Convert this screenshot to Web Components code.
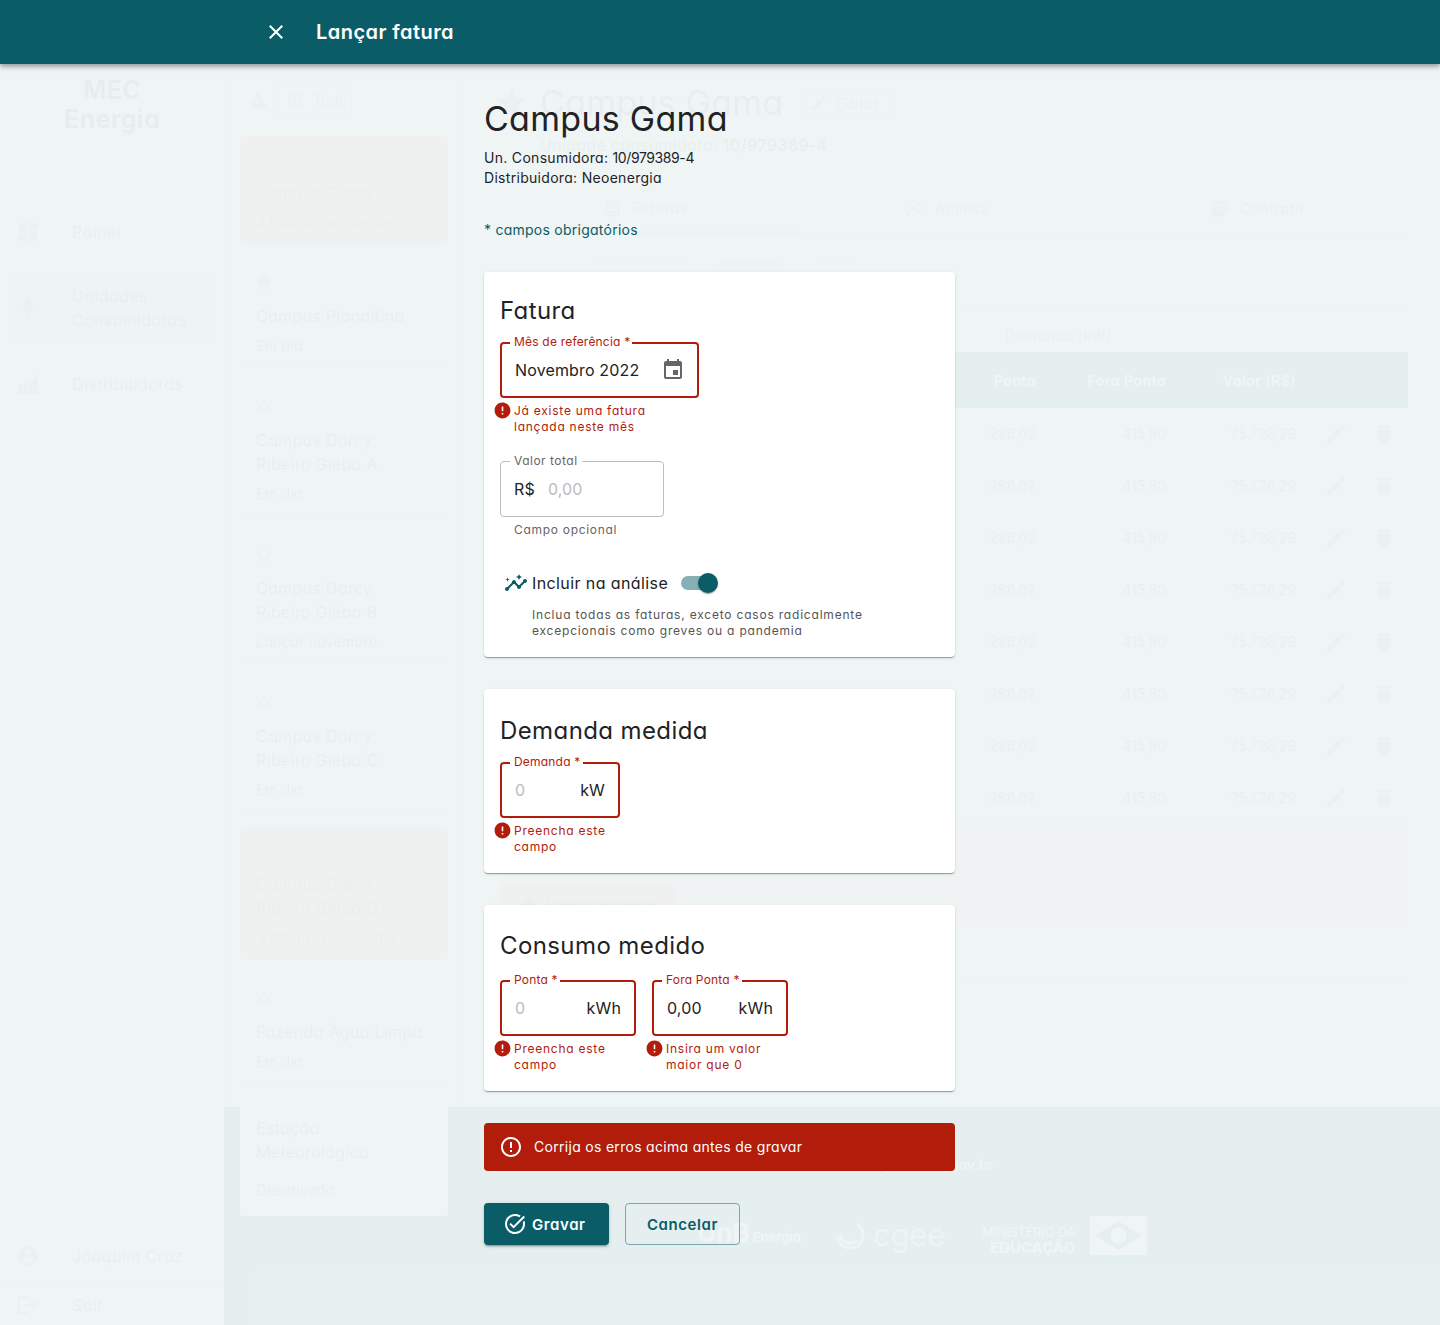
<!DOCTYPE html>
<html lang="pt-BR">
<head>
<meta charset="utf-8">
<title>Lançar fatura</title>
<style>
  html, body { margin: 0; padding: 0; }
  body {
    width: 1440px;
    height: 1325px;
    overflow: hidden;
    position: relative;
    background: #fff;
    color: #222;
    font-family: Inter, "Noto Sans", sans-serif;
    font-feature-settings: "cv11";
  }
</style>
</head>
<body>
<app-page>
  <side-nav slot="nav"></side-nav>
  <unit-list slot="list"></unit-list>
  <unit-detail slot="detail"></unit-detail>
  <site-footer slot="footer"></site-footer>
</app-page>

<invoice-drawer title="Lançar fatura">
  <drawer-heading name="Campus Gama" consumer="10/979389-4" supplier="Neoenergia"></drawer-heading>

  <form-card heading="Fatura" style="--top: 23px; --gap: 15px; --bottom: 18px">
    <out-field label="Mês de referência *" width="199" invalid>
      Novembro 2022
      <m-icon slot="end" name="event" size="24" style="color:#666;margin-right:-1px"></m-icon>
      <field-error slot="below">Já existe uma fatura<br>lançada neste mês</field-error>
    </out-field>
    <out-field label="Valor total" width="164" style="margin-top:26px">
      <span slot="start">R$</span>
      <span style="color:#bbb">0,00</span>
      <field-help slot="below">Campo opcional</field-help>
    </out-field>
    <analysis-toggle>Inclua todas as faturas, exceto casos radicalmente<br>excepcionais como greves ou a pandemia</analysis-toggle>
  </form-card>

  <form-card heading="Demanda medida" style="--top: 26px; --gap: 15px; --bottom: 18px">
    <out-field label="Demanda *" width="120" invalid>
      <span style="color:#bbb">0</span>
      <span slot="end">kW</span>
      <field-error slot="below">Preencha este<br>campo</field-error>
    </out-field>
  </form-card>

  <form-card heading="Consumo medido" style="--top: 25px; --gap: 18px; --bottom: 18px">
    <field-row>
      <out-field label="Ponta *" width="136" invalid>
        <span style="color:#bbb">0</span>
        <span slot="end">kWh</span>
        <field-error slot="below">Preencha este<br>campo</field-error>
      </out-field>
      <out-field label="Fora Ponta *" width="136" invalid>
        0,00
        <span slot="end">kWh</span>
        <field-error slot="below">Insira um valor<br>maior que 0</field-error>
      </out-field>
    </field-row>
  </form-card>

  <error-banner>Corrija os erros acima antes de gravar</error-banner>
  <form-actions></form-actions>
</invoice-drawer>

<script>
const ICONS = {
  close: 'M19 6.41 17.59 5 12 10.59 6.41 5 5 6.41 10.59 12 5 17.59 6.41 19 12 13.41 17.59 19 19 17.59 13.41 12z',
  event: 'M17 12h-5v5h5v-5zM16 1v2H8V1H6v2H5c-1.11 0-1.99.9-1.99 2L3 19c0 1.1.89 2 2 2h14c1.1 0 2-.9 2-2V5c0-1.1-.9-2-2-2h-1V1h-2zm3 18H5V8h14v11z',
  error: 'M12 2C6.48 2 2 6.48 2 12s4.48 10 10 10 10-4.48 10-10S17.52 2 12 2zm1 15h-2v-2h2v2zm0-4h-2V7h2v6z',
  errorOutline: 'M11 15h2v2h-2zm0-8h2v6h-2zm.99-5C6.47 2 2 6.48 2 12s4.47 10 9.99 10C17.52 22 22 17.52 22 12S17.52 2 11.99 2zM12 20c-4.42 0-8-3.58-8-8s3.58-8 8-8 8 3.58 8 8-3.58 8-8 8z',
  insights: 'M21 8c-1.45 0-2.26 1.44-1.93 2.51l-3.55 3.56c-.3-.09-.74-.09-1.04 0l-2.55-2.55C12.27 10.45 11.46 9 10 9c-1.45 0-2.27 1.44-1.93 2.52l-4.56 4.55C2.44 15.74 1 16.55 1 18c0 1.1.9 2 2 2 1.45 0 2.26-1.44 1.93-2.51l4.55-4.56c.3.09.74.09 1.04 0l2.55 2.55C12.73 16.55 13.54 18 15 18c1.45 0 2.27-1.44 1.93-2.52l3.56-3.55c1.07.33 2.51-.48 2.51-1.93 0-1.1-.9-2-2-2zM15 9l.94-2.07L18 6l-2.06-.93L15 3l-.92 2.07L12 6l2.08.93L15 9zM3.5 11 4 9l2-.5L4 8l-.5-2L3 8l-2 .5L3 9l.5 2z',
  taskAlt: 'M22 5.18 10.59 16.6l-4.24-4.24 1.41-1.41 2.83 2.83 10-10L22 5.18zm-2.21 5.04c.13.57.21 1.17.21 1.78 0 4.42-3.58 8-8 8s-8-3.58-8-8 3.58-8 8-8c1.58 0 3.04.46 4.28 1.25l1.44-1.44C16.1 2.67 14.13 2 12 2 6.48 2 2 6.48 2 12s4.48 10 10 10 10-4.48 10-10c0-1.19-.22-2.33-.6-3.39l-1.61 1.61z',
  star: 'M12 17.27 18.18 21l-1.64-7.03L22 9.24l-7.19-.61L12 2 9.19 8.63 2 9.24l5.46 4.73L5.82 21z',
  starBorder: 'M22 9.24l-7.19-.62L12 2 9.19 8.63 2 9.24l5.46 4.73L5.82 21 12 17.27 18.18 21l-1.63-7.03L22 9.24zM12 15.4l-3.76 2.27 1-4.28-3.32-2.88 4.38-.38L12 6.1l1.71 4.04 4.38.38-3.32 2.88 1 4.28L12 15.4z',
  dashboard: 'M3 13h8V3H3v10zm0 8h8v-6H3v6zm10 0h8V11h-8v10zm0-18v6h8V3h-8z',
  bulb: 'M3.55 18.54l1.41 1.41 1.79-1.8-1.41-1.41-1.79 1.8zM11 22.45h2V19.5h-2v2.95zM4 10.5H1v2h3v-2zm11-4.19V1.5H9v4.81C7.21 7.35 6 9.28 6 11.5c0 3.31 2.69 6 6 6s6-2.69 6-6c0-2.22-1.21-4.15-3-5.19zm5 4.19v2h3v-2h-3zm-2.76 7.66l1.79 1.8 1.41-1.41-1.8-1.79-1.4 1.4z',
  factory: 'M22 22H2V11l6 2v-2l6 2V9h4l.5-6h2.5l1 6v13zM6 16v3h2v-3H6zm5 0v3h2v-3h-2zm5 0v3h2v-3h-2z',
  edit: 'M3 17.25V21h3.75L17.81 9.94l-3.75-3.75L3 17.25zM20.71 7.04c.39-.39.39-1.02 0-1.41l-2.34-2.34c-.39-.39-1.02-.39-1.41 0l-1.83 1.83 3.75 3.75 1.83-1.83z',
  trash: 'M6 19c0 1.1.9 2 2 2h8c1.1 0 2-.9 2-2V7H6v12zM19 4h-3.5l-1-1h-5l-1 1H5v2h14V4z',
  account: 'M12 2C6.48 2 2 6.48 2 12s4.48 10 10 10 10-4.48 10-10S17.52 2 12 2zm0 3c1.66 0 3 1.34 3 3s-1.34 3-3 3-3-1.34-3-3 1.34-3 3-3zm0 14.2c-2.5 0-4.71-1.28-6-3.22.03-1.99 4-3.08 6-3.08 1.99 0 5.97 1.09 6 3.08-1.29 1.94-3.5 3.22-6 3.22z',
  logout: 'M17 7l-1.41 1.41L18.17 11H8v2h10.17l-2.58 2.58L17 17l5-5zM4 5h8V3H4c-1.1 0-2 .9-2 2v14c0 1.1.9 2 2 2h8v-2H4V5z',
  warning: 'M1 21h22L12 2 1 21zm12-3h-2v-2h2v2zm0-4h-2v-4h2v4z',
  grid: 'M4 8h4V4H4v4zm6 12h4v-4h-4v4zm-6 0h4v-4H4v4zm0-6h4v-4H4v4zm6 0h4v-4h-4v4zm6-10v4h4V4h-4zm-6 4h4V4h-4v4zm6 6h4v-4h-4v4zm0 6h4v-4h-4v4z',
  receipt: 'M19.5 3.5 18 2l-1.5 1.5L15 2l-1.5 1.5L12 2l-1.5 1.5L9 2 7.5 3.5 6 2v14H3v3c0 1.66 1.34 3 3 3h12c1.66 0 3-1.34 3-3V2l-1.5 1.5zM15 20H6c-.55 0-1-.45-1-1v-1h10v2zm4-1c0 .55-.45 1-1 1s-1-.45-1-1v-3H8V5h11v14zM9 7h6v2H9zm7 0h2v2h-2zM9 10h6v2H9zm7 0h2v2h-2z',
  note: 'M3 3h18v13l-5 5H3V3zm3 4v2h12V7H6zm0 4v2h8v-2H6zm9 8 4-4h-4v4z'
};

class MIcon extends HTMLElement {
  connectedCallback() {
    if (this.shadowRoot) return;
    const size = this.getAttribute('size') || 24;
    this.attachShadow({ mode: 'open' });
    this.shadowRoot.innerHTML = `
      <style>
        :host { display: inline-flex; flex: none; width: ${size}px; height: ${size}px; }
        svg { display: block; width: 100%; height: 100%; fill: currentColor; }
      </style>
      <svg viewBox="0 0 24 24"><path d="${ICONS[this.getAttribute('name')]}"></path></svg>
    `;
  }
}

class AppPage extends HTMLElement {
  connectedCallback() {
    this.attachShadow({ mode: 'open' });
    this.shadowRoot.innerHTML = `
      <style>
        :host {
          display: grid;
          grid-template-columns: 224px 239px 1fr;
          grid-template-rows: 1107px 218px;
          height: 1325px;
        }
        ::slotted([slot=nav]) { grid-row: 1 / 3; grid-column: 1; }
        ::slotted([slot=list]) { grid-row: 1; grid-column: 2; z-index: 1; }
        ::slotted([slot=detail]) { grid-row: 1; grid-column: 3; }
        ::slotted([slot=footer]) { grid-row: 2; grid-column: 2 / 4; }
      </style>
      <slot name="nav"></slot>
      <slot name="list"></slot>
      <slot name="detail"></slot>
      <slot name="footer"></slot>
    `;
  }
}

class SideNav extends HTMLElement {
  connectedCallback() {
    this.attachShadow({ mode: 'open' });
    const item = (icon, label, extra = '') => `
      <div class="item ${extra}"><m-icon name="${icon}"></m-icon><span>${label}</span></div>`;
    this.shadowRoot.innerHTML = `
      <style>
        :host {
          display: flex;
          flex-direction: column;
          background: #fff;
          box-shadow: 1px 0 3px rgba(0,0,0,.3);
          position: relative;
          z-index: 2;
          font-size: 16px;
          letter-spacing: .4px;
          color: #333;
        }
        .logo { padding-top: 76px; text-align: center; font-size: 25px; line-height: 29px; font-weight: 700; }
        nav { margin-top: 67px; padding: 0 10px; display: flex; flex-direction: column; }
        .item {
          display: flex; align-items: center; gap: 32px;
          padding: 0 0 0 6px; min-height: 62px; line-height: 24px; border-radius: 4px; color: #444;
        }
        .item m-icon { color: #999; }
        .item + .item { margin-top: 14px; }
        .active { background: #d2d2d2; }
        .foot { margin-top: auto; margin-bottom: -4px; }
        .row { display: flex; align-items: center; gap: 32px; padding: 0 0 0 16px; height: 48px; color: #444; }
        .row m-icon { color: #999; }
        .row + .row { border-top: 1px solid #ccc; }
      </style>
      <div class="logo">MEC<br>Energia</div>
      <nav>
        ${item('dashboard', 'Painel')}
        ${item('bulb', 'Unidades<br>Consumidoras', 'active')}
        ${item('factory', 'Distribuidoras')}
      </nav>
      <div class="foot">
        <div class="row"><m-icon name="account"></m-icon><span>Joaquim Cruz</span></div>
        <div class="row"><m-icon name="logout"></m-icon><span>Sair</span></div>
      </div>
    `;
  }
}

class UnitCard extends HTMLElement {
  connectedCallback() {
    this.attachShadow({ mode: 'open' });
    const star = this.getAttribute('star');
    this.shadowRoot.innerHTML = `
      <style>
        :host {
          display: block;
          padding: 10px 16px 11px;
          border-bottom: 1px solid #ccc;
          box-sizing: border-box;
          border-radius: 4px;
          color: #444;
          letter-spacing: .3px;
        }
        :host([alert]) { background: #ff8c8c; border-bottom: none; padding-bottom: 12px; }
        :host([plain]) { padding: 16px; border: 0; background: #fff; height: 116px; }
        m-icon { display: flex; color: #888; margin: 0 0 10px -2px; width: 20px; height: 24px; align-items: center; }
        .name { font-size: 16px; line-height: 24px; }
        .sub { font-size: 14px; line-height: 20px; margin-top: 8px; }
        :host([plain]) .sub { margin-top: 16px; }
      </style>
      ${star ? `<m-icon name="${star}" size="20"></m-icon>` : ''}
      <div class="name"><slot></slot></div>
      <div class="sub">${this.getAttribute('sub')}</div>
    `;
  }
}

class UnitList extends HTMLElement {
  connectedCallback() {
    this.attachShadow({ mode: 'open' });
    this.shadowRoot.innerHTML = `
      <style>
        :host {
          display: block;
          background: #fff;
          border-right: 1px solid #aaa;
          box-sizing: border-box;
          padding: 81px 14px 0 16px;
          height: 1107px;
        }
        .filters { display: flex; align-items: center; gap: 6px; height: 38px; padding-left: 8px; margin-bottom: 17px; color: #888; }
        .all { display: flex; align-items: center; gap: 8px; height: 38px; padding: 0 10px; border: 1px solid #ccc; border-radius: 4px; font-size: 14px; font-weight: 600; width: 78px; box-sizing: border-box; }
        .cards { display: flex; flex-direction: column; gap: 16px; width: 208px; }
      </style>
      <div class="filters">
        <m-icon name="warning" size="20"></m-icon>
        <div class="all"><m-icon name="grid" size="20"></m-icon>Tudo</div>
      </div>
      <div class="cards">
        <unit-card star="star" sub="3 faturas pendentes" alert>Campus Gama</unit-card>
        <unit-card star="star" sub="Em dia">Campus Planaltina</unit-card>
        <unit-card star="starBorder" sub="Em dia">Campus Darcy<br>Ribeiro Gleba A</unit-card>
        <unit-card star="starBorder" sub="Lançar novembro">Campus Darcy<br>Ribeiro Gleba B</unit-card>
        <unit-card star="starBorder" sub="Em dia">Campus Darcy<br>Ribeiro Gleba C</unit-card>
        <unit-card star="starBorder" sub="3 faturas pendentes" alert>Campus Darcy<br>Ribeiro Gleba D</unit-card>
        <unit-card star="starBorder" sub="Em dia">Fazenda Água Limpa</unit-card>
        <unit-card sub="Desativada" plain>Estação<br>Meteorológica</unit-card>
      </div>
    `;
  }
}

class UnitDetail extends HTMLElement {
  connectedCallback() {
    this.attachShadow({ mode: 'open' });
    const row = `<div class="tr"><span></span><span class="n">286,02</span><span class="n">415,80</span><span class="n">75.726,29</span><m-icon name="edit"></m-icon><m-icon name="trash"></m-icon></div>`;
    this.shadowRoot.innerHTML = `
      <style>
        :host {
          display: block;
          background: #fff;
          padding: 82px 32px 0 35px;
          color: #444;
          overflow: hidden;
        }
        .title { display: flex; align-items: center; height: 42px; }
        .title > m-icon { margin: 0 11px 0 -5px; color: #888; }
        h1 { margin: 0 18px 0 0; font-size: 34px; line-height: 42px; font-weight: 400; letter-spacing: .25px; white-space: nowrap; }
        .edit { display: flex; align-items: center; gap: 8px; width: 90px; height: 30px; box-sizing: border-box; padding-left: 8px; border: 1px solid #bbb; border-radius: 4px; font-size: 14px; font-weight: 600; letter-spacing: .5px; color: #888; }
        .uc { margin: 9px 0 0 42px; font-size: 16px; line-height: 24px; letter-spacing: .3px; }
        .uc b { font-weight: 600; }
        .tabs { display: grid; grid-template-columns: repeat(3, 302px); margin-top: 29px; height: 47px; align-items: flex-start; border-bottom: 1px solid #ddd; color: #888; font-size: 14px; font-weight: 600; letter-spacing: .5px; }
        .tab { display: flex; align-items: center; justify-content: center; gap: 10px; height: 46px; box-sizing: border-box; }
        .tab.on { border-bottom: 2px solid #9bb; height: 47px; padding-bottom: 2px; }
        .tab.on, .tab.mid { padding-right: 8px; }
        .tab.end { padding-left: 8px; }
        .tab span { margin-top: -1px; }
        .chips { display: flex; margin: 27px 0 0 84px; gap: 18px; padding-bottom: 12px; border-bottom: 1px solid #ddd; }
        .chip { height: 32px; border: 1px solid #bbb; border-radius: 16px; box-sizing: border-box; }
        .t { display: grid; grid-template-columns: 457px 97px 130px 130px 48px 48px; }
        .group { margin-top: 14px; height: 32px; }
        .group div { grid-column: 2 / 4; background: #f2f7f7; box-sizing: border-box; padding-right: 20px; text-align: center; font-size: 14px; line-height: 32px; font-weight: 600; letter-spacing: .4px; color: #888; }
        .th { height: 56px; display: grid; grid-template-columns: 457px 97px 130px 130px 96px; align-items: center; background: #0a5c67; color: #fff; font-size: 14px; font-weight: 600; letter-spacing: .5px; }
        .th span { text-align: right; padding-right: 16px; }
        .tr { display: grid; grid-template-columns: 457px 97px 130px 130px 48px 48px; align-items: center; height: 52px; border-bottom: 1px solid #e8e8e8; box-sizing: border-box; font-size: 14px; color: #555; }
        .n { text-align: right; padding-right: 16px; }
        .tr m-icon { justify-self: center; color: #888; }
        .pending { height: 53px; background: #ffbcbc; border-bottom: 1px solid #ffd0d0; box-sizing: border-box; }
        .pending.first { margin-top: -1px; }
        .pending.go { display: flex; padding: 9px 0 0 2px; }
        .launch { display: flex; align-items: center; gap: 8px; width: 176px; height: 36px; padding-left: 20px; box-sizing: border-box; border-radius: 4px; background: #ff7070; font-size: 14px; font-weight: 600; letter-spacing: .4px; color: #555; }
        .blank { height: 51px; border-bottom: 1px solid #d8d8d8; box-sizing: border-box; }
      </style>
      <div class="title">
        <m-icon name="star" size="36"></m-icon>
        <h1>Campus Gama</h1>
        <div class="edit"><m-icon name="edit" size="18"></m-icon>Editar</div>
      </div>
      <div class="uc">Unidade consumidora: <b>10/979389-4</b></div>
      <div class="tabs">
        <div class="tab on"><m-icon name="receipt" size="20"></m-icon><span>Faturas</span></div>
        <div class="tab mid"><m-icon name="insights" size="20"></m-icon><span>Análise</span></div>
        <div class="tab end"><m-icon name="note" size="20"></m-icon><span>Contrato</span></div>
      </div>
      <div class="chips">
        <div class="chip" style="width:110px"></div>
        <div class="chip" style="width:80px;background:#c4dcdd"></div>
        <div class="chip" style="width:52px"></div>
      </div>
      <div class="t group"><span></span><div>Demanda (kW)</div></div>
      <div class="th"><span></span><span>Ponta</span><span>Fora Ponta</span><span>Valor (R$)</span><span></span></div>
      ${row.repeat(8)}
      <div class="pending first"></div>
      <div class="pending go"><div class="launch"><m-icon name="warning" size="18"></m-icon>Lançar outubro</div></div>
      <div class="blank"></div>
    `;
  }
}

class SiteFooter extends HTMLElement {
  connectedCallback() {
    this.attachShadow({ mode: 'open' });
    this.shadowRoot.innerHTML = `
      <style>
        :host {
          display: block;
          background: #0a5c67;
          color: #fff;
          overflow: hidden;
          padding-top: 48px;
        }
        .mail { text-align: right; padding-right: 447px; font-size: 14px; line-height: 20px; letter-spacing: .2px; }
        .logos { display: flex; align-items: center; justify-content: flex-end; padding: 40px 293px 0 0; height: 40px; }
        .unb { display: flex; align-items: baseline; gap: 3px; width: 97px; margin-right: 41px; font-size: 26px; font-weight: 700; line-height: 40px; white-space: nowrap; }
        .unb small { font-size: 13px; font-weight: 600; }
        .cgee { display: flex; align-items: center; gap: 8px; margin-right: 37px; font-size: 31px; line-height: 40px; font-weight: 300; }
        .cgee svg { width: 30px; height: 30px; fill: none; stroke: #fff; stroke-width: 3; }
        .mec { text-align: right; font-size: 12.5px; line-height: 15px; margin: 9px 15px 0 0; }
        .mec b { display: block; font-size: 15px; font-weight: 700; }
        .flag { width: 57px; height: 39px; background: #fff; display: flex; }
        .flag svg { width: 100%; height: 100%; }
      </style>
      <div class="mail">Entre em contato: mecenergia@mec.gov.br</div>
      <div class="logos">
        <div class="unb">UnB <small>Energia</small></div>
        <div class="cgee">
          <svg viewBox="0 0 30 30"><path d="M22 4a13 13 0 1 1-20 12M5 15a10 10 0 0 0 17 5"></path></svg>
          cgee
        </div>
        <div class="mec">MINISTÉRIO DA<b>EDUCAÇÃO</b></div>
        <div class="flag"><svg viewBox="0 0 57 39"><path d="M5 19.5 28.5 5 52 19.5 28.5 34z" fill="#0a5c67"></path><circle cx="28.5" cy="19.5" r="8" fill="#fff"></circle></svg></div>
      </div>
    `;
  }
}

class InvoiceDrawer extends HTMLElement {
  connectedCallback() {
    this.attachShadow({ mode: 'open' });
    this.shadowRoot.innerHTML = `
      <style>
        :host {
          display: block;
          position: absolute;
          inset: 0;
          z-index: 10;
          background: rgba(238, 245, 245, .963);
        }
        header {
          display: flex;
          align-items: center;
          height: 64px;
          padding-left: 264px;
          background: #0a5c67;
          color: #fff;
          box-shadow: 0 2px 4px rgba(0,0,0,.25), 0 4px 5px rgba(0,0,0,.14);
        }
        h2 { margin: 0 0 0 28px; font-size: 20px; line-height: 28px; font-weight: 600; letter-spacing: .45px; }
        main { display: flex; flex-direction: column; width: 471px; margin-left: 484px; }
      </style>
      <header>
        <m-icon name="close" size="24"></m-icon>
        <h2>${this.getAttribute('title')}</h2>
      </header>
      <main><slot></slot></main>
    `;
  }
}

class DrawerHeading extends HTMLElement {
  connectedCallback() {
    this.attachShadow({ mode: 'open' });
    this.shadowRoot.innerHTML = `
      <style>
        :host { display: block; padding-top: 35px; color: #1f2326; }
        h1 { margin: 0 0 9px; font-size: 34px; line-height: 40px; font-weight: 400; letter-spacing: .28px; }
        p { margin: 0; font-size: 14px; line-height: 20px; letter-spacing: .3px; }
        p span { letter-spacing: -.4px; }
        .req { margin: 32px 0; color: #0a5c67; letter-spacing: .25px; }
      </style>
      <h1>${this.getAttribute('name')}</h1>
      <p>Un. Consumidora: <span>${this.getAttribute('consumer')}</span></p>
      <p>Distribuidora: ${this.getAttribute('supplier')}</p>
      <p class="req">* campos obrigatórios</p>
    `;
  }
}

class FormCard extends HTMLElement {
  connectedCallback() {
    this.attachShadow({ mode: 'open' });
    this.shadowRoot.innerHTML = `
      <style>
        :host {
          display: block;
          background: #fff;
          border-radius: 4px;
          padding: var(--top) 16px var(--bottom);
          margin-bottom: 32px;
          box-shadow: 0 2px 1px -1px rgba(0,0,0,.2), 0 1px 1px rgba(0,0,0,.14), 0 1px 3px rgba(0,0,0,.12);
        }
        h3 { margin: 0 0 var(--gap); font-size: 24px; line-height: 32px; font-weight: 400; letter-spacing: .4px; color: #1f2326; }
      </style>
      <h3>${this.getAttribute('heading')}</h3>
      <slot></slot>
    `;
  }
}

class FieldRow extends HTMLElement {
  connectedCallback() {
    this.attachShadow({ mode: 'open' });
    this.shadowRoot.innerHTML = `
      <style>:host { display: flex; gap: 16px; }</style>
      <slot></slot>
    `;
  }
}

class OutField extends HTMLElement {
  connectedCallback() {
    this.attachShadow({ mode: 'open' });
    this.shadowRoot.innerHTML = `
      <style>
        :host { display: block; width: ${this.getAttribute('width')}px; }
        .box {
          position: relative;
          display: flex;
          align-items: center;
          height: 56px;
          box-sizing: border-box;
          padding: 0 13px;
          border: 1px solid #bdbdbd;
          border-radius: 4px;
          font-size: 16px;
          letter-spacing: .15px;
          color: #222;
        }
        :host([invalid]) .box { border: 2px solid #b21c0a; }
        label {
          position: absolute;
          top: -9px;
          left: 9px;
          padding: 0 4px;
          background: #fff;
          font-size: 12px;
          line-height: 16px;
          letter-spacing: .5px;
          color: #666;
          white-space: nowrap;
        }
        :host([invalid]) label { top: -10px; left: 8px; padding-right: 2px; color: #b21c0a; letter-spacing: .2px; }
        .value { flex: 1; min-width: 0; white-space: nowrap; }
        ::slotted([slot=start]) { margin-right: 13px; }
      </style>
      <div class="box">
        <label>${this.getAttribute('label')}</label>
        <slot name="start"></slot>
        <div class="value"><slot></slot></div>
        <slot name="end"></slot>
      </div>
      <slot name="below"></slot>
    `;
  }
}

class FieldError extends HTMLElement {
  connectedCallback() {
    this.attachShadow({ mode: 'open' });
    this.shadowRoot.innerHTML = `
      <style>
        :host {
          display: flex;
          gap: 2px;
          margin: 5px 0 0 -7px;
          font-size: 12px;
          line-height: 16px;
          letter-spacing: .75px;
          color: #b21c0a;
          white-space: nowrap;
        }
        m-icon { margin-top: -2px; }
        div { flex: 1; }
      </style>
      <m-icon name="error" size="19"></m-icon>
      <div><slot></slot></div>
    `;
  }
}

class FieldHelp extends HTMLElement {
  connectedCallback() {
    this.attachShadow({ mode: 'open' });
    this.shadowRoot.innerHTML = `
      <style>
        :host { display: block; margin: 5px 0 0 14px; font-size: 12px; line-height: 16px; letter-spacing: .7px; color: #666; white-space: nowrap; }
      </style>
      <slot></slot>
    `;
  }
}

class AnalysisToggle extends HTMLElement {
  connectedCallback() {
    this.attachShadow({ mode: 'open' });
    this.shadowRoot.innerHTML = `
      <style>
        :host { display: block; margin-top: 33px; }
        .line { display: flex; align-items: center; height: 24px; font-size: 16px; letter-spacing: .4px; color: #222; }
        m-icon { margin: 0 4px 0 4px; color: #0a5c67; }
        .switch { position: relative; width: 33px; height: 14px; margin-left: 13px; border-radius: 7px; background: #86b0b5; }
        .thumb {
          position: absolute;
          top: -3px;
          right: -4px;
          width: 20px;
          height: 20px;
          border-radius: 50%;
          background: #0a5c67;
          box-shadow: 0 2px 1px -1px rgba(0,0,0,.2), 0 1px 1px rgba(0,0,0,.14), 0 1px 3px rgba(0,0,0,.12);
        }
        p { margin: 12px 0 0 32px; font-size: 12px; line-height: 16px; letter-spacing: .8px; color: #555; white-space: nowrap; }
      </style>
      <div class="line">
        <m-icon name="insights" size="24"></m-icon>
        <span>Incluir na análise</span>
        <div class="switch"><div class="thumb"></div></div>
      </div>
      <p><slot></slot></p>
    `;
  }
}

class ErrorBanner extends HTMLElement {
  connectedCallback() {
    this.attachShadow({ mode: 'open' });
    this.shadowRoot.innerHTML = `
      <style>
        :host {
          display: flex;
          align-items: center;
          gap: 11px;
          height: 48px;
          padding-left: 15px;
          margin-bottom: 32px;
          border-radius: 4px;
          background: #b21c0a;
          color: #fff;
          font-size: 14px;
          letter-spacing: .3px;
        }
        span { margin-top: -1px; }
      </style>
      <m-icon name="errorOutline" size="24"></m-icon>
      <span><slot></slot></span>
    `;
  }
}

class FormActions extends HTMLElement {
  connectedCallback() {
    this.attachShadow({ mode: 'open' });
    this.shadowRoot.innerHTML = `
      <style>
        :host { display: flex; gap: 16px; }
        button {
          display: flex;
          align-items: center;
          justify-content: center;
          gap: 5px;
          height: 42px;
          padding: 0;
          border-radius: 4px;
          font: inherit;
          font-feature-settings: inherit;
          font-size: 15px;
          font-weight: 600;
          letter-spacing: .6px;
        }
        .save {
          width: 125px;
          border: 0;
          justify-content: flex-start;
          padding-left: 19px;
          background: #0a5c67;
          color: #fff;
          box-shadow: 0 3px 1px -2px rgba(0,0,0,.2), 0 2px 2px rgba(0,0,0,.14), 0 1px 5px rgba(0,0,0,.12);
        }
        .cancel { width: 115px; border: 1px solid #7ba6ab; background: transparent; color: #0a5c67; }
      </style>
      <button class="save"><m-icon name="taskAlt" size="24"></m-icon>Gravar</button>
      <button class="cancel">Cancelar</button>
    `;
  }
}

customElements.define('m-icon', MIcon);
customElements.define('app-page', AppPage);
customElements.define('side-nav', SideNav);
customElements.define('unit-card', UnitCard);
customElements.define('unit-list', UnitList);
customElements.define('unit-detail', UnitDetail);
customElements.define('site-footer', SiteFooter);
customElements.define('invoice-drawer', InvoiceDrawer);
customElements.define('drawer-heading', DrawerHeading);
customElements.define('form-card', FormCard);
customElements.define('field-row', FieldRow);
customElements.define('out-field', OutField);
customElements.define('field-error', FieldError);
customElements.define('field-help', FieldHelp);
customElements.define('analysis-toggle', AnalysisToggle);
customElements.define('error-banner', ErrorBanner);
customElements.define('form-actions', FormActions);
</script>
</body>
</html>
